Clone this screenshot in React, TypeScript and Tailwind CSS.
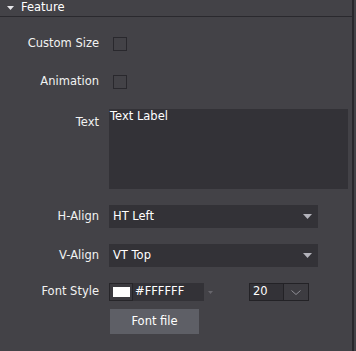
import { useState } from "react";

const font = { fontFamily: '"DejaVu Sans", "Liberation Sans", sans-serif' };

function Label({ children, top }: { children: string; top?: boolean }) {
  return (
    <div
      className={`w-[99px] shrink-0 text-right text-[11.5px] text-[#f2f2f2] ${top ? "pt-[5px]" : ""}`}
    >
      {children}
    </div>
  );
}

function Checkbox() {
  const [on, setOn] = useState(false);
  return (
    <button
      onClick={() => setOn(!on)}
      className="ml-[14px] w-[14px] h-[14px] border border-[#29282d] bg-[#434247] flex items-center justify-center"
    >
      {on && <span className="w-[6px] h-[6px] bg-white" />}
    </button>
  );
}

function Select({ value }: { value: string }) {
  return (
    <div className="ml-[10px] w-[209px] h-[23px] bg-[#333237] flex items-center justify-between pl-[4px] pr-[6px]">
      <span className="text-[11.5px] text-white">{value}</span>
      <svg width="9" height="5" viewBox="0 0 9 5">
        <path d="M0 0 H9 L4.5 5 Z" fill="#b3b3bb" />
      </svg>
    </div>
  );
}

export default function App() {
  return (
    <div className="w-[356px] h-[351px] bg-[#434247] flex" style={font}>
      <div className="w-[352px] h-full flex flex-col">
        {/* Header */}
        <div className="h-[17px] flex items-center border-b border-[#2a292e] pl-[7px]">
          <svg width="7" height="4" viewBox="0 0 7 4" className="mr-[7px]">
            <path d="M0 0 H7 L3.5 4 Z" fill="#e6e6ea" />
          </svg>
          <span className="text-[11.5px] text-white">Feature</span>
        </div>

        <div className="flex flex-col pt-[20px]">
          <div className="flex items-center h-[14px]">
            <Label>Custom Size</Label>
            <Checkbox />
          </div>
          <div className="flex items-center h-[14px] mt-[24px]">
            <Label>Animation</Label>
            <Checkbox />
          </div>

          <div className="flex items-start mt-[20px]">
            <Label top>Text</Label>
            <div className="ml-[10px] w-[239px] h-[80px] bg-[#333237] px-[1px] pt-[0px] text-[11.5px] text-white leading-[15px]">
              Text Label
            </div>
          </div>

          <div className="flex items-center mt-[16px]">
            <Label>H-Align</Label>
            <Select value="HT Left" />
          </div>
          <div className="flex items-center mt-[16px]">
            <Label>V-Align</Label>
            <Select value="VT Top" />
          </div>

          <div className="flex items-center mt-[16px] h-[18px]">
            <Label>Font Style</Label>
            <div className="ml-[10px] w-[24px] h-[18px] border border-[#262529] bg-[#3b3a3f] flex items-center justify-center">
              <span className="w-[17px] h-[10px] bg-white" />
            </div>
            <div className="w-[71px] h-[18px] bg-[#333237] flex items-center pl-[2px] text-[11.5px] text-white">
              #FFFFFF
            </div>
            <svg width="5" height="3" viewBox="0 0 5 3" className="ml-[4px]">
              <path d="M0 0 H5 L2.5 3 Z" fill="#67666c" />
            </svg>
            <div className="ml-[36px] flex h-[18px] border border-[#232226]">
              <div className="w-[34px] bg-[#333237] flex items-center pl-[3px] text-[11.5px] text-white border-r border-[#232226]">
                20
              </div>
              <div className="w-[24px] bg-[#3d3c41] flex items-center justify-center">
                <svg width="10" height="5" viewBox="0 0 10 5">
                  <path d="M0.5 0.5 L5 4.5 L9.5 0.5" fill="none" stroke="#8f8e95" strokeWidth="1" />
                </svg>
              </div>
            </div>
          </div>

          <div className="flex mt-[8px]">
            <div className="w-[99px] shrink-0" />
            <button className="ml-[11px] w-[89px] h-[25px] bg-[#5e5f66] text-[11.5px] text-white">
              Font file
            </button>
          </div>
        </div>
      </div>
      <div className="w-[2px] h-full bg-[#28272b]" />
    </div>
  );
}
